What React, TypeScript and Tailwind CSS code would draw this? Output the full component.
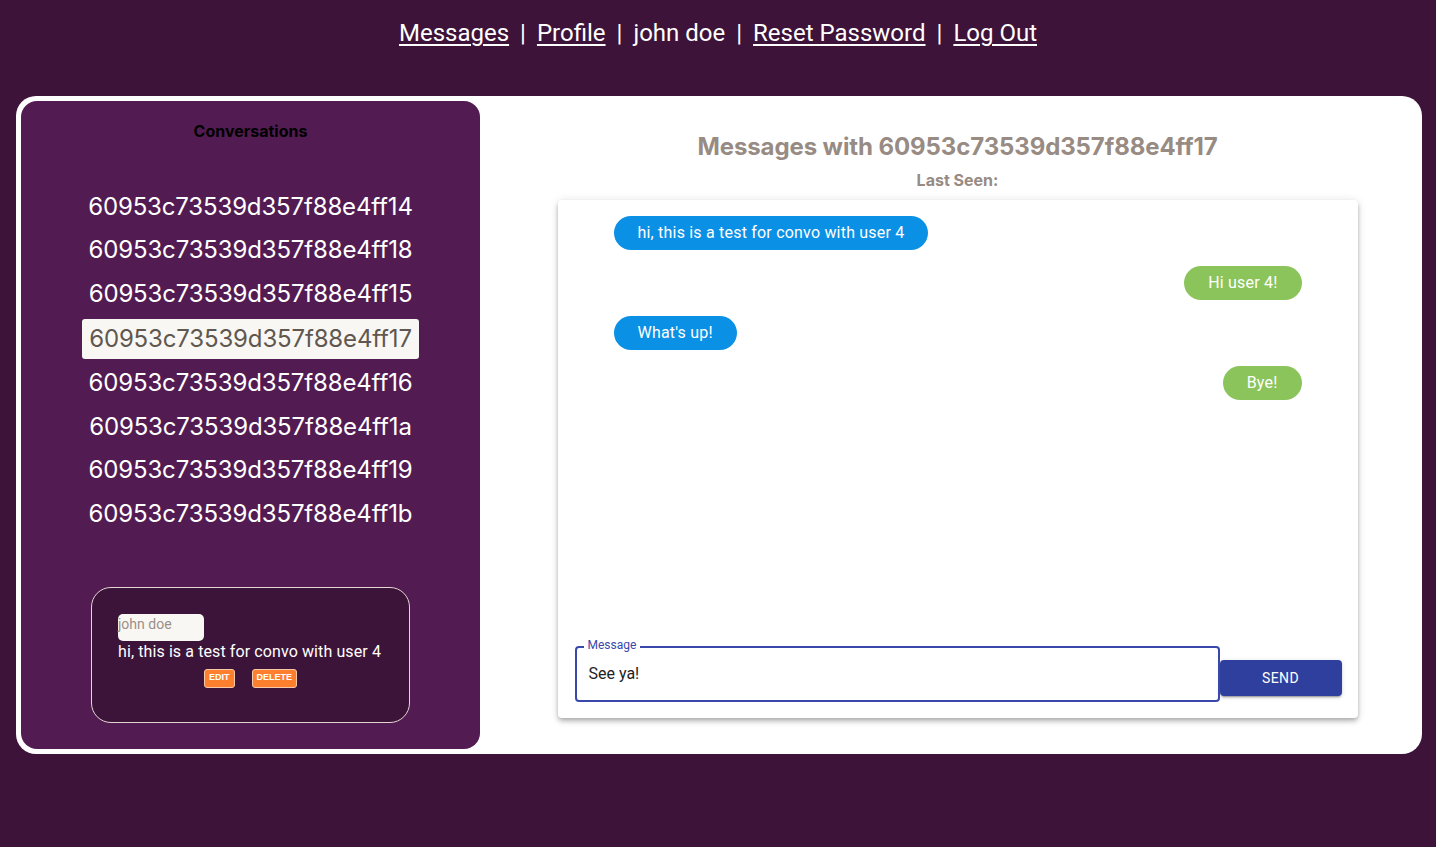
import React from 'react'

const conversations = [
  '60953c73539d357f88e4ff14',
  '60953c73539d357f88e4ff18',
  '60953c73539d357f88e4ff15',
  '60953c73539d357f88e4ff17',
  '60953c73539d357f88e4ff16',
  '60953c73539d357f88e4ff1a',
  '60953c73539d357f88e4ff19',
  '60953c73539d357f88e4ff1b',
]

const messages = [
  { text: 'hi, this is a test for convo with user 4', mine: false },
  { text: 'Hi user 4!', mine: true },
  { text: "What's up!", mine: false },
  { text: 'Bye!', mine: true },
]

const selected = '60953c73539d357f88e4ff17'

const sysFont = { fontFamily: 'Inter, Roboto, sans-serif' }

export default function App() {
  return (
    <div
      className="min-h-screen bg-[#3d1339] pb-[93px]"
      style={{ fontFamily: 'Roboto, "Noto Sans", sans-serif' }}
    >
      {/* top nav */}
      <nav className="flex justify-center items-center h-[66px] text-[24px] text-white">
        <a className="underline underline-offset-[3px] decoration-[2px]">Messages</a>
        <span className="mx-[11px]">|</span>
        <a className="underline underline-offset-[3px] decoration-[2px]">Profile</a>
        <span className="mx-[11px]">|</span>
        <span>john doe</span>
        <span className="mx-[11px]">|</span>
        <a className="underline underline-offset-[3px] decoration-[2px]">Reset Password</a>
        <span className="mx-[11px]">|</span>
        <a className="underline underline-offset-[3px] decoration-[2px]">Log Out</a>
      </nav>

      <div className="ml-[16px] mr-[14px] mt-[30px] bg-white rounded-[20px] p-[5px] flex">
        {/* sidebar */}
        <div className="w-[459px] h-[648px] bg-[#521c53] rounded-[16px] flex flex-col items-center">
          <h2 className="mt-[18px] text-[16px] font-bold text-black" style={sysFont}>
            Conversations
          </h2>
          <ul className="mt-[42px] flex flex-col items-center tracking-[-0.15px]" style={sysFont}>
            {conversations.map((id) =>
              id === selected ? (
                <li
                  key={id}
                  className="h-[40px] my-[3px] px-[7px] flex items-center bg-[#f9f7f3] rounded-[3px] text-[24px] text-[#5f5750]"
                >
                  {id}
                </li>
              ) : (
                <li key={id} className="h-[43.5px] flex items-center text-[24px] text-white">
                  {id}
                </li>
              )
            )}
          </ul>

          <div className="mt-[51px] w-[319px] h-[136px] bg-[#3c1339] border border-[#e6d6d3] rounded-[20px] px-[26px] pt-[26px]">
            <div className="w-[86px] h-[27px] bg-[#f9f7f3] rounded-[5px] text-[14px] text-[#9a9089] leading-[20px]">
              john doe
            </div>
            <p className="mt-[1px] text-[16px] text-white leading-[20px] tracking-[0.1px]">
              hi, this is a test for convo with user 4
            </p>
            <div className="mt-[7px] flex justify-center gap-[17px]">
              <button
                className="h-[19px] px-[4px] bg-[#fe7f2d] border border-[#f5c8a8] rounded-[3px] text-[9px] font-bold text-white"
                style={{ fontFamily: '"Liberation Sans", Arial, sans-serif' }}
              >
                EDIT
              </button>
              <button
                className="h-[19px] px-[4px] bg-[#fe7f2d] border border-[#f5c8a8] rounded-[3px] text-[9px] font-bold text-white"
                style={{ fontFamily: '"Liberation Sans", Arial, sans-serif' }}
              >
                DELETE
              </button>
            </div>
          </div>
        </div>

        {/* main */}
        <div className="flex-1 flex flex-col items-center pl-[18px]">
          <h1
            className="mt-[32px] text-[24px] font-bold text-[#978b83] leading-[28px] tracking-[-0.1px]"
            style={sysFont}
          >
            Messages with {selected}
          </h1>
          <p className="mt-[9px] text-[16px] font-bold text-[#978b83] leading-[20px]" style={sysFont}>
            Last Seen:
          </p>

          <div className="mt-[10px] w-[800px] h-[518px] bg-white rounded-[4px] shadow-[0_2px_4px_-1px_rgba(0,0,0,0.2),0_4px_5px_0_rgba(0,0,0,0.14),0_1px_10px_0_rgba(0,0,0,0.12)] flex flex-col">
            <div className="flex-1 flex flex-col gap-[16px] px-[56px] pt-[16px]">
              {messages.map((m, i) => (
                <div key={i} className={m.mine ? 'flex justify-end' : 'flex justify-start'}>
                  <span
                    className={
                      m.mine
                        ? 'h-[34px] px-[24px] flex items-center rounded-full bg-[#8bc45a] text-white text-[16px] tracking-[0.2px]'
                        : 'h-[34px] px-[24px] flex items-center rounded-full bg-[#0a90e4] text-white text-[16px] tracking-[0.2px]'
                    }
                  >
                    {m.text}
                  </span>
                </div>
              ))}
            </div>

            <div className="flex items-end pl-[17px] pr-[16px] pb-[16px]">
              <div className="relative flex-1">
                <span className="absolute -top-[8px] left-[9px] px-[4px] bg-white text-[12px] leading-[14px] text-[#3949ab]">
                  Message
                </span>
                <div className="h-[56px] border-2 border-[#3949ab] rounded-[4px] flex items-center px-[12px] text-[16px] text-[#222]">
                  See ya!
                </div>
              </div>
              <button className="mb-[6px] w-[122px] h-[36px] bg-[#2f3f9e] rounded-[4px] text-white text-[14px] tracking-[0.4px] shadow-[0_3px_1px_-2px_rgba(0,0,0,0.2),0_2px_2px_0_rgba(0,0,0,0.14),0_1px_5px_0_rgba(0,0,0,0.12)]">
                SEND
              </button>
            </div>
          </div>
        </div>
      </div>
    </div>
  )
}
